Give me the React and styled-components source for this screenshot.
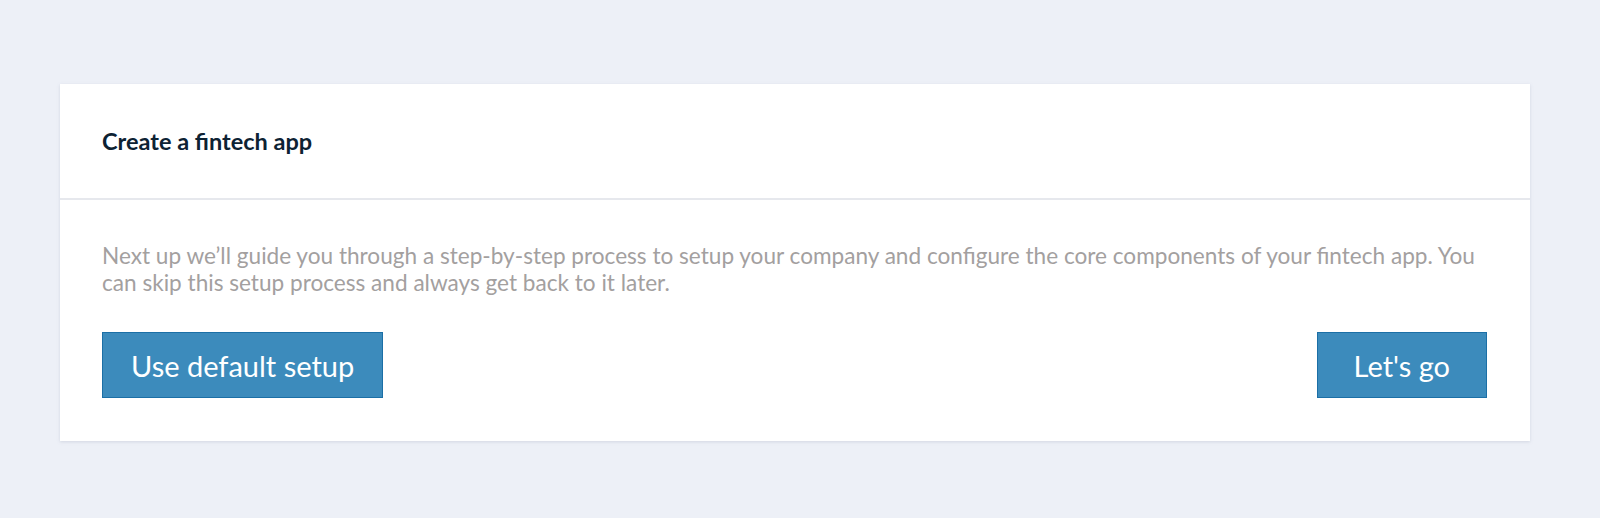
import React from 'react';
import styled, { createGlobalStyle } from 'styled-components';

const GlobalStyle = createGlobalStyle`
    html, body {
        margin: 0;
        padding: 0;
        background: #edf0f7;
        font-family: Lato, "Liberation Sans", sans-serif;
    }
`;

const Page = styled.div`
    min-height: 518px;
    padding: 84px 70px 0 60px;
    box-sizing: border-box;
`;

const Card = styled.section`
    background: #fff;
    box-shadow: 0 1px 3px rgba(160, 170, 190, 0.35);
`;

const CardHeader = styled.header`
    height: 114px;
    display: flex;
    align-items: center;
    padding: 0 42px;
    border-bottom: 2px solid #e6e8ed;
`;

const Title = styled.h2`
    margin: 0;
    font-size: 23.5px;
    font-weight: 700;
    color: #0d2233;
`;

const CardBody = styled.div`
    padding: 42px 43px 43px 42px;
`;

const Intro = styled.p`
    margin: 0 0 36px;
    font-size: 22.6px;
    line-height: 27px;
    color: #a3a09f;
`;

const Actions = styled.div`
    display: flex;
    justify-content: space-between;
`;

const Button = styled.button`
    height: 66px;
    padding: 0 ${p => p.$pad}px;
    background: #3c8bbc;
    border: 1px solid #1b6fa6;
    border-radius: 0;
    color: #fff;
    font-family: inherit;
    font-size: 29px;
    cursor: pointer;
`;

const App = () => {
    return (
        <Page>
            <GlobalStyle />
            <Card>
                <CardHeader>
                    <Title>Create a fintech app</Title>
                </CardHeader>
                <CardBody>
                    <Intro>
                        Next up we’ll guide you through a step-by-step process to setup your company and configure the core components of your fintech app. You can skip this setup process and always get back to it later.
                    </Intro>
                    <Actions>
                        <Button $pad={28}>Use default setup</Button>
                        <Button $pad={36}>Let's go</Button>
                    </Actions>
                </CardBody>
            </Card>
        </Page>
    );
};

export default App;
